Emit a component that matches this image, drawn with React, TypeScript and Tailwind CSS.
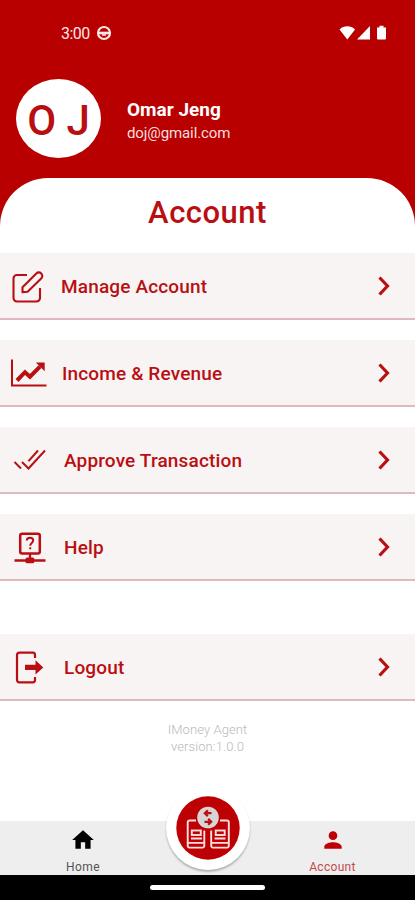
import type { ReactNode } from 'react';

interface MenuRowProps {
  icon: ReactNode;
  label: string;
  labelClass: string;
  className?: string;
}

const EditIcon = () => (
  <svg width="50" height="66" viewBox="0 0 50 66" fill="none" stroke="#b90f12" strokeWidth="2.1" strokeLinejoin="round">
    <path d="M27 22H17a3.5 3.5 0 0 0-3.5 3.5V45a3.5 3.5 0 0 0 3.5 3.5h19.5A3.5 3.5 0 0 0 40 45V35" />
    <path d="M22.5 39.3v-5L36.3 20.5a3.3 3.3 0 0 1 4.9 0 3.3 3.3 0 0 1 0 4.9L27.6 38.7z" />
  </svg>
);

const ChartIcon = () => (
  <svg width="50" height="66" viewBox="0 0 50 66" fill="none" stroke="#b90f12">
    <path d="M12 19.5v26h34.5" strokeWidth="2" />
    <path d="M17 40.500l8-8.300 5 4.500 10-10" strokeWidth="4" />
    <path d="M35.8 22.5h8.900v8.700z" fill="#b90f12" stroke="none" />
  </svg>
);

const CheckIcon = () => (
  <svg width="50" height="66" viewBox="0 0 50 66" fill="none" stroke="#b90f12" strokeWidth="2">
    <path d="M14.5 35l6.500 6.500" />
    <path d="M22 35l6.500 6.500L45 23.500" />
    <path d="M28.5 34.200L38 23.500" />
  </svg>
);

const HelpIcon = () => (
  <svg width="50" height="66" viewBox="0 0 50 66" fill="none" stroke="#b90f12">
    <rect x="20.2" y="19.8" width="19.6" height="19.6" rx="2" strokeWidth="2.5" />
    <path d="M26.8 26.500c0-3.600 6.400-3.600 6.400 0 0 2.400-3 2.500-3 5.200" strokeWidth="2" />
    <path d="M29.2 33.300h2v2h-2z" fill="#b90f12" stroke="none" />
    <path d="M30 39.500v6M14.500 46.500h31" strokeWidth="2.3" />
    <rect x="25.5" y="43.6" width="8.8" height="5.6" rx="1.5" fill="#b90f12" stroke="none" />
  </svg>
);

const LogoutIcon = () => (
  <svg width="50" height="66" viewBox="0 0 50 66" fill="none" stroke="#b90f12" strokeWidth="2.2">
    <path d="M35 24v-3a2.300 2.300 0 0 0-2.300-2.300H19.300A2.300 2.300 0 0 0 17 21v25a2.300 2.300 0 0 0 2.300 2.300h13.400a2.300 2.300 0 0 0 2.300-2.300v-3" />
    <path d="M25 30.700h10.500v-4.400l7.800 7.200-7.800 7v-4.400H25z" fill="#b90f12" stroke="none" />
  </svg>
);

const TransferIcon = () => (
  <svg width="64" height="64" viewBox="0 0 64 64" fill="none" stroke="#fbdede" strokeWidth="1.9">
    <circle cx="32" cy="32" r="31.7" fill="#bd0003" stroke="none" />
    <path d="M20 24.500h-6.500a1.800 1.800 0 0 0-1.800 1.800v23.500a1.800 1.800 0 0 0 1.800 1.800h13a1.800 1.800 0 0 0 1.800-1.800V34.500" />
    <path d="M44 24.500h7a1.800 1.800 0 0 1 1.800 1.800v23.500a1.800 1.800 0 0 1-1.800 1.800H37a1.800 1.800 0 0 1-1.800-1.800V34.500" />
    <path d="M12 46.800h16M35.500 46.800h17" strokeWidth="1.8" />
    <path d="M15 42.500h11M38.500 42.500h11" strokeWidth="1.8" />
    <rect x="15.800" y="34.500" width="9" height="4.500" />
    <rect x="39.700" y="34.500" width="9" height="4.500" />
    <circle cx="32" cy="21.500" r="10.800" fill="#d9d5d7" stroke="none" />
    <g stroke="#b90f12" strokeWidth="2.2">
      <path d="M35.500 17.200h-6M31.800 14.200l-3 3 3 3" />
      <path d="M28.500 25.800h6M32.200 22.800l3 3-3 3" />
    </g>
  </svg>
);

function MenuRow({ icon, label, labelClass, className = '' }: MenuRowProps) {
  return (
    <div className={`flex h-[67px] items-center border-b-2 border-[#dfb9bd] bg-[#f8f4f4] ${className}`}>
      {icon}
      <span className={`whitespace-nowrap pt-[3px] text-[19px] font-medium tracking-[0.15px] text-[#b90f12] ${labelClass}`}>
        {label}
      </span>
      <svg className="ml-auto mr-[22px]" width="18" height="24" viewBox="0 0 18 24" fill="none" stroke="#b90f12" strokeWidth="3.2">
        <path d="M4.500 3.500l8 8.500-8 8.500" />
      </svg>
    </div>
  );
}

export default function App() {
  return (
    <div className="flex h-[900px] w-[415px] flex-col overflow-hidden bg-[#b90000] font-['Roboto',sans-serif]">
      {/* Status bar */}
      <div className="flex h-[66px] shrink-0 items-center pl-[61px] pr-7 text-white">
        <span className="w-[35px] whitespace-nowrap pt-px text-[16px] tracking-[-0.5px] text-[#fbe6e6]">3:00</span>
        <svg width="16" height="16" viewBox="0 0 16 16" fill="none" stroke="#fbe6e6">
          <circle cx="8" cy="8" r="6" strokeWidth="2.2" />
          <path d="M1.500 8h13" strokeWidth="2.6" />
          <path d="M6 10h4" strokeWidth="1.5" />
        </svg>
        <svg className="ml-auto" width="48" height="16" viewBox="0 0 48 16" fill="#fff">
          <path d="M0.500 4.500c4-4.300 11.500-4.300 15.500 0L8.300 14.500z" />
          <path d="M18 14.500L31 1v13.500z" />
          <path d="M38 2.500h2.500V0.800h4v1.700H47v11a1 1 0 0 1-1 1h-7a1 1 0 0 1-1-1z" />
        </svg>
      </div>

      {/* Profile */}
      <div className="flex h-[112px] shrink-0 items-start pl-4 pt-[13px]">
        <div className="flex h-[79px] w-[85px] items-center justify-center rounded-[50%] bg-white">
          <span className="whitespace-nowrap pt-1 text-[42px] font-medium leading-none text-[#b90f12]">O J</span>
        </div>
        <div className="ml-[26px] mt-[20px] whitespace-nowrap">
          <div className="text-[19px] font-bold leading-[22px] text-white">Omar Jeng</div>
          <div className="mt-[2px] text-[15px] leading-[20px] tracking-[-0.1px] text-[#fbdede]">doj@gmail.com</div>
        </div>
      </div>

      {/* Sheet */}
      <div className="flex min-h-0 flex-1 flex-col rounded-t-[48px] bg-white">
        <h1 className="h-[75px] pt-[16px] text-center text-[31px] font-medium leading-[38px] tracking-[0.5px] text-[#b90f12]">
          Account
        </h1>
        <div className="flex flex-col gap-5">
          <MenuRow icon={<EditIcon />} label="Manage Account" labelClass="ml-[11px]" />
          <MenuRow icon={<ChartIcon />} label="Income & Revenue" labelClass="ml-[12px]" />
          <MenuRow icon={<CheckIcon />} label="Approve Transaction" labelClass="ml-[14px]" />
          <MenuRow icon={<HelpIcon />} label="Help" labelClass="ml-[14px]" />
          <MenuRow icon={<LogoutIcon />} label="Logout" labelClass="ml-[14px]" className="mt-[33px]" />
        </div>
        <p className="mt-[20px] text-center text-[13px] font-light leading-[17px] tracking-[0.1px] text-[#b9b9b9]">
          IMoney Agent
          <br />
          version:1.0.0
        </p>
      </div>

      {/* Bottom navigation */}
      <div className="relative flex h-[54px] shrink-0 bg-[#eeeeee]">
        <div className="flex w-[166px] flex-col items-center pt-[6px]">
          <svg width="26" height="26" viewBox="0 0 24 24" fill="#000">
            <path d="M10 20v-6h4v6h5v-8h3L12 3 2 12h3v8z" />
          </svg>
          <span className="mt-[6px] text-[12px] leading-[16px] tracking-[0.4px] text-[#555]">Home</span>
        </div>
        <div className="ml-auto flex w-[165px] flex-col items-center pt-[6px]">
          <svg width="26" height="26" viewBox="0 0 24 24" fill="#bd0003">
            <path d="M12 12c2.210 0 4-1.790 4-4s-1.790-4-4-4-4 1.790-4 4 1.790 4 4 4zm0 2c-2.670 0-8 1.340-8 4v2h16v-2c0-2.660-5.330-4-8-4z" />
          </svg>
          <span className="mt-[6px] text-[12px] leading-[16px] tracking-[0.3px] text-[#c14a50]">Account</span>
        </div>
        <div className="absolute left-[166px] top-[-35px] flex size-[84px] items-center justify-center rounded-full bg-white shadow-[0_2px_2px_rgba(0,0,0,0.25)]">
          <TransferIcon />
        </div>
      </div>

      {/* Gesture bar */}
      <div className="flex h-[25px] shrink-0 justify-center bg-black pt-[10px]">
        <div className="h-[5px] w-[115px] rounded-full bg-white" />
      </div>
    </div>
  );
}
